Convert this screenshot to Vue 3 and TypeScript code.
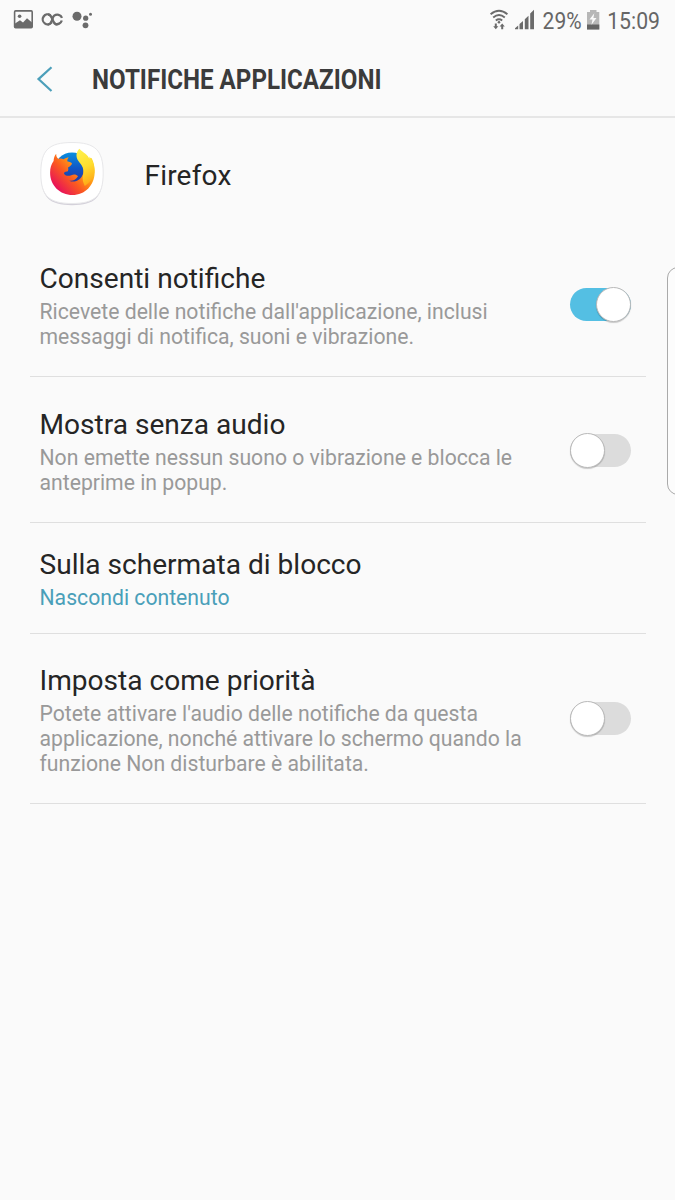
<script setup lang="ts">
import { ref } from 'vue'

interface Setting {
  title: string
  lines: string[]
  on?: boolean
  link?: boolean
}

const settings = ref<Setting[]>([
  {
    title: 'Consenti notifiche',
    lines: ["Ricevete delle notifiche dall'applicazione, inclusi", 'messaggi di notifica, suoni e vibrazione.'],
    on: true,
  },
  {
    title: 'Mostra senza audio',
    lines: ['Non emette nessun suono o vibrazione e blocca le', 'anteprime in popup.'],
    on: false,
  },
  { title: 'Sulla schermata di blocco', lines: ['Nascondi contenuto'], link: true },
  {
    title: 'Imposta come priorità',
    lines: [
      "Potete attivare l'audio delle notifiche da questa",
      'applicazione, nonché attivare lo schermo quando la',
      'funzione Non disturbare è abilitata.',
    ],
    on: false,
  },
])

function toggle(item: Setting) {
  item.on = !item.on
}
</script>

<template>
  <div class="screen">
    <div class="status">
      <svg class="left-icons" width="110" height="40" viewBox="0 0 110 40">
        <rect x="14.6" y="10.9" width="17.6" height="16.8" rx="1" fill="none" stroke="#6b6b6b" stroke-width="1.6" />
        <circle cx="19.6" cy="16.2" r="1.8" fill="#6b6b6b" />
        <path d="M15 23.500l5-3.200 3 2.200 4-4.200 5 4.200v5.500H15z" fill="#6b6b6b" />
        <g fill="none" stroke="#6b6b6b" stroke-width="2.300">
          <path d="M50.500 15.200a5 5 0 1 0 1.200 7.200" />
          <path d="M48 14.500c3 .2 3.500 2.200 4.500 5s2.200 5.200 5 5.200" />
          <path d="M55 23.700a5 5 0 0 0 6.800-3.200M62 17.800a5 5 0 0 0-7.800-2.100c-1.400 1.200-1.700 2.800-2.300 4.800-.7 2.300-1.800 3.800-4.300 4" />
        </g>
        <g fill="#6b6b6b">
          <circle cx="77" cy="16.300" r="4.500" />
          <circle cx="85.700" cy="18.200" r="2.600" />
          <circle cx="85.500" cy="25.300" r="2.900" />
          <circle cx="90.500" cy="14.300" r="1.500" />
        </g>
      </svg>
      <svg class="right-icons" width="195" height="40" viewBox="480 0 195 40">
        <g fill="none" stroke="#6b6b6b" stroke-width="1.900">
          <path d="M490.600 14.300q8.400-7 16.800 0" />
          <path d="M493.200 17.500q5.800-4.800 11.600 0" />
          <path d="M495.800 20.500q3.200-2.500 6.400 0" />
        </g>
        <circle cx="499" cy="22.200" r="1.300" fill="#6b6b6b" />
        <path d="M494.800 23.400h2v2.800h1.600l-2.600 3-2.600-3h1.600zM501.200 29.200h2v-2.800h1.600l-2.600-3-2.600 3h1.600z" fill="#6b6b6b" />
        <path d="M515 29.300v-1l3.200-2.700v3.700zM519.500 29.300v-5.200l3.500-3v8.200zM524.800 29.300v-10l3.700-3.500v13.500zM530.200 29.300v-15.700l3.800-3.800v19.500z" fill="#6b6b6b" />
        <text x="542.600" y="29.400" textLength="39" lengthAdjust="spacingAndGlyphs">29%</text>
        <path d="M587 12h3v-2h6.500v2h2.800v17.500H587z" fill="#b7b7b7" />
        <path d="M587 24.500h12.300v5H587z" fill="#646464" />
        <path d="M594.300 13.200l-4.800 6.400h3l-1 5.200 5-6.700h-3.100z" fill="#fafafa" />
        <text x="607.200" y="29.400" textLength="52.800" lengthAdjust="spacingAndGlyphs">15:09</text>
      </svg>
    </div>

    <header class="header">
      <svg class="back" width="24" height="32" viewBox="0 0 24 32">
        <path d="M19.500 4.200L6.500 16.100 19.500 28" fill="none" stroke="#4c9fba" stroke-width="2.200" />
      </svg>
      <svg class="heading" width="520" height="40" viewBox="0 0 520 40">
        <text x="0" y="29.500" textLength="289.500" lengthAdjust="spacingAndGlyphs">NOTIFICHE APPLICAZIONI</text>
      </svg>
    </header>

    <div class="app">
      <svg class="app-icon" width="68" height="70" viewBox="0 0 68 70">
        <defs>
          <linearGradient id="fox" x1="0.950" y1="0.150" x2="0.150" y2="0.850">
            <stop offset="0.100" stop-color="#ffd52e" />
            <stop offset="0.350" stop-color="#ff9a16" />
            <stop offset="0.620" stop-color="#fb5a20" />
            <stop offset="1" stop-color="#e8115a" />
          </linearGradient>
          <linearGradient id="globe" x1="0.500" y1="0" x2="0.500" y2="1">
            <stop offset="0" stop-color="#0a8fdf" />
            <stop offset="0.450" stop-color="#1055c5" />
            <stop offset="1" stop-color="#312c91" />
          </linearGradient>
          <linearGradient id="flame" x1="0.300" y1="0" x2="0.600" y2="1">
            <stop offset="0" stop-color="#fff04b" />
            <stop offset="0.500" stop-color="#ffdf2f" />
            <stop offset="1" stop-color="#ffa514" />
          </linearGradient>
        </defs>
        <path d="M34 3.500C57 3.500 65 11 65 34S57 65.200 34 65.200 3 57 3 34 11 3.500 34 3.500z" fill="#d4d1da" />
        <path d="M34 2.500C57 2.500 65.200 10 65.200 33S57 63.500 34 63.500 2.800 56 2.800 33 11 2.500 34 2.500z" fill="#fff" stroke="#e8e8ea" stroke-width="1" />
        <circle cx="34" cy="30.500" r="18" fill="url(#globe)" />
        <path d="M18.200 13.800c-.1 2.500.8 4.200 2.300 5.100 1.700-.7 3.500-.6 5 .3 1.700-1.200 3.500-1.800 5.300-1.800-1.300 1.300-1.800 2.600-1.300 4 2.300.3 3.700.8 4.500 2-.4 1.600-2.200 2.900-4 4.100.6 1.900.3 3-.5 4-2-.2-3.400.5-3.500 2.200 2 2.500 4.500 2.500 7.300 1.500 2.600-1.300 5-.8 6.700 1-2.200 3.600-5.300 5-8.700 4.500 5.300 2.600 12.600-1 14-8 1-5-1.200-8.600-3.700-11.800L53.500 18c2.200 3.700 3.300 8.900 3.200 14.500C56.300 45.500 47 55 34.500 55S12 45.500 12.100 32.500c0-4.500 1.200-8.500 3.500-11.500.1-2.800.9-5.200 2.600-7.200z" fill="url(#fox)" />
        <path d="M41.300 8.800c-4.300 4.800-3.300 9.700.4 14 3.500 4 4.700 8 3.100 13-.5 3.800.2 6.600 2 10.200 5.500-3.500 9.300-9 9.800-15.500-.3-6-1.900-10.300-5.200-14l.1 3.200c-1.200-5.300-6.200-6.500-10.200-10.900z" fill="url(#flame)" />
      </svg>
      <span class="app-name">Firefox</span>
    </div>

    <main class="list">
      <section v-for="item in settings" :key="item.title" class="row" :class="{ compact: item.link }">
        <div class="copy">
          <div class="title">{{ item.title }}</div>
          <div class="sub" :class="{ link: item.link }">
            <div v-for="line in item.lines" :key="line">{{ line }}</div>
          </div>
        </div>
        <div v-if="!item.link" class="switch" :class="{ on: item.on }" role="switch" :aria-checked="item.on" @click="toggle(item)">
          <div class="knob"></div>
        </div>
      </section>
    </main>
    <div class="edge-handle"></div>
  </div>
</template>

<style>
body {
  margin: 0;
  background: #fafafa;
}
</style>

<style scoped>
.screen {
  position: relative;
  width: 675px;
  height: 1200px;
  overflow: hidden;
  background: #fafafa;
  font-family: Roboto, sans-serif;
  color: #252525;
}
.status {
  display: flex;
  justify-content: space-between;
  height: 40px;
}
.right-icons text {
  font-family: Roboto, sans-serif;
  font-size: 24px;
  fill: #666;
}
.header {
  display: flex;
  align-items: center;
  box-sizing: border-box;
  height: 78px;
  padding-top: 2px;
  padding-left: 32px;
  border-bottom: 2px solid #e6e6e6;
}
.heading {
  margin-left: 36px;
}
.heading text {
  font-family: Roboto, sans-serif;
  font-size: 28.500px;
  font-weight: 700;
  fill: #3b3b3b;
}
.app {
  display: flex;
  align-items: center;
  height: 114px;
  padding-left: 38px;
}
.app-name {
  margin-left: 38.500px;
  font-size: 28px;
  letter-spacing: 0.200px;
}
.list {
  margin: 0 29px 0 30px;
}
.row {
  display: flex;
  justify-content: space-between;
  align-items: center;
  padding: 30px 15px 27px 9.500px;
  border-bottom: 1px solid #dfdfdf;
}
.row:first-child {
  padding-top: 29px;
}
.row.compact {
  padding-top: 24px;
  padding-bottom: 23px;
}
.row:last-child {
  padding-top: 29px;
}
.title {
  font-size: 28.080px;
  line-height: 36px;
  white-space: nowrap;
}
.sub {
  margin-top: 2px;
  font-size: 21.200px;
  line-height: 25px;
  color: #999;
  white-space: nowrap;
}
.sub.link {
  color: #4a9fb9;
}
.switch {
  display: flex;
  align-items: center;
  width: 61px;
  height: 33px;
  margin-bottom: 2px;
  border-radius: 17px;
  background: #dcdcdc;
}
.switch.on {
  justify-content: flex-end;
  background: #54bfe3;
}
.knob {
  box-sizing: border-box;
  width: 35px;
  height: 35px;
  flex: none;
  border: 1px solid #b9b9b9;
  border-radius: 50%;
  background: #fff;
  box-shadow: 0 1px 1px rgba(0, 0, 0, 0.2);
}
.edge-handle {
  position: absolute;
  top: 267px;
  right: -14px;
  box-sizing: border-box;
  width: 22px;
  height: 228px;
  border: 1px solid #aaa;
  border-radius: 11px;
  background: #fcfcfc;
}
</style>
